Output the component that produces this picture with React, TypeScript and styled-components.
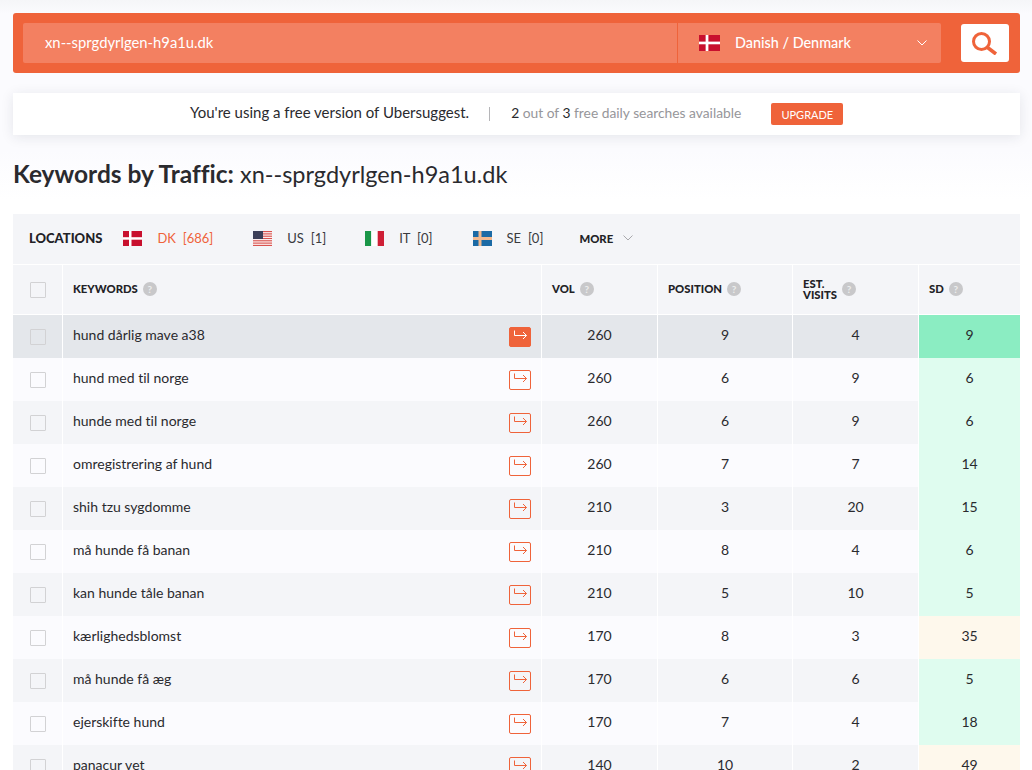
import styled, { createGlobalStyle } from 'styled-components'
import { FunctionComponent } from 'react'

const GlobalStyle = createGlobalStyle`
  html, body {
    margin: 0;
    height: 770px;
    overflow: hidden;
    background: #fff;
    font-family: Lato, "Noto Sans", sans-serif;
    font-variant-ligatures: none;
    color: #2a2a2e;
  }
  * { box-sizing: border-box; }
`

const ORANGE = '#ef633a'
const GRID = '50px 479px 116px 135px 126px 101px'

const Page = styled('div')`
  height: 770px;
  padding: 13px 12px 0 13px;
  background: linear-gradient(to bottom, #f5f6f8 0, #fbfbfe 14px, #fbfbfe 150px, #ffffff 200px);
`

const SearchBar = styled('div')`
  height: 60px;
  padding: 10px 11px 10px 10px;
  display: flex;
  align-items: center;
  background: ${ORANGE};
  border-radius: 3px;
`

const DomainInput = styled('div')`
  width: 654px;
  height: 40px;
  padding: 0 0 3px 22px;
  display: flex;
  align-items: center;
  background: #f38061;
  border-radius: 2px 0 0 2px;
  color: #fff;
  font-size: 14.8px;
`

const LanguageSelect = styled('div')`
  width: 263px;
  height: 40px;
  margin-left: 1px;
  padding: 0 14px 0 21px;
  display: flex;
  align-items: center;
  background: #f38061;
  border-radius: 0 2px 2px 0;
  color: #fff;
  font-size: 14.4px;
  font-weight: 500;

  & > span {
    margin: 0 0 1px 15px;
    flex-grow: 1;
  }
`

const SearchButton = styled('div')`
  width: 48px;
  height: 38px;
  margin-left: 20px;
  display: flex;
  align-items: center;
  justify-content: center;
  background: #fff;
  border-radius: 3px;
`

const Banner = styled('div')`
  height: 42px;
  margin-top: 20px;
  padding-left: 177px;
  display: flex;
  align-items: center;
  background: #fff;
  box-shadow: 0 2px 12px rgba(30, 40, 60, 0.1);
`

const BannerText = styled('span')`
  margin-bottom: 5px;
  font-size: 15px;
`

const BannerDivider = styled('span')`
  width: 1px;
  height: 14px;
  margin: 0 21px 0 20px;
  background: #b5b5b8;
`

const Quota = styled('span')`
  margin-bottom: 4px;
  color: #96969a;
  font-size: 13.8px;

  & > b {
    color: #2a2a2e;
    font-weight: 400;
  }
`

const UpgradeButton = styled('span')`
  width: 72px;
  height: 22px;
  margin-left: 30px;
  display: flex;
  align-items: center;
  justify-content: center;
  background: ${ORANGE};
  border-radius: 2px;
  color: #fff;
  font-size: 11px;
`

const Title = styled('h1')`
  margin: 23px 0 24px;
  height: 32px;
  line-height: 32px;
  font-size: 23.5px;
  font-weight: 400;
  white-space: nowrap;

  & > b {
    font-size: 24.5px;
    font-weight: 700;
  }
`

const Locations = styled('div')`
  height: 51px;
  padding: 0 0 2px 16px;
  display: flex;
  align-items: center;
  background: #f4f5f8;
  border-bottom: 1px solid #fff;
`

const Caps = styled('span')`
  font-size: 11.3px;
  font-weight: 900;
  color: #222226;
`

const LocationsLabel = styled(Caps)`
  font-size: 13px;
`

const LocationTab = styled('span')<{ $active?: boolean; $left: number }>`
  margin-left: ${p => p.$left}px;
  display: flex;
  align-items: center;
  font-size: 13px;
  color: ${p => (p.$active ? ORANGE : '#3a3a3e')};

  & > span {
    margin-left: 15px;
    word-spacing: 3.5px;
  }
`

const MoreTab = styled('span')`
  margin-left: 36px;
  display: flex;
  align-items: center;
  gap: 10px;
`

const Row = styled('div')<{ $bg?: string }>`
  display: grid;
  grid-template-columns: ${GRID};
  height: 43px;
  background: ${p => p.$bg || 'transparent'};
`

const HeaderRow = styled(Row)`
  height: 50px;
  background: #f4f5f8;
  border-bottom: 1px solid #fff;
`

const Cell = styled('div')<{ $bg?: string; $last?: boolean }>`
  display: flex;
  align-items: center;
  justify-content: center;
  padding-bottom: 5px;
  font-size: 14px;
  background: ${p => p.$bg || 'transparent'};
  border-right: ${p => (p.$last ? 'none' : '1px solid #fff')};
`

const KeywordCell = styled(Cell)`
  justify-content: space-between;
  padding: 0 10px;

  & > span {
    padding-bottom: 5px;
  }
`

const HeadCell = styled('div')<{ $last?: boolean }>`
  display: flex;
  align-items: center;
  gap: 5px;
  padding: 0 0 2px 10px;
  border-right: ${p => (p.$last ? 'none' : '1px solid #fff')};
`

const TwoLine = styled(Caps)`
  line-height: 11.5px;
  margin-top: 1px;
`

const CheckCell = styled(Cell)`
  padding: 1px 0 0;
`

const Checkbox = styled('span')`
  width: 16px;
  height: 16px;
  border: 1px solid #d2d2d4;
  border-radius: 1px;
`

const Help = styled('span')`
  width: 14px;
  height: 14px;
  display: flex;
  align-items: center;
  justify-content: center;
  border-radius: 50%;
  background: #c8c8ca;
  color: #eceded;
  font-size: 10px;
  font-weight: 700;
`

const ArrowButton = styled('span')<{ $filled?: boolean }>`
  width: 22px;
  height: 20px;
  margin-top: 1px;
  display: flex;
  align-items: center;
  justify-content: center;
  border: 1px solid ${ORANGE};
  border-radius: 2px;
  background: ${p => (p.$filled ? ORANGE : 'transparent')};
  color: ${p => (p.$filled ? '#fff' : ORANGE)};
`

// End styled components ------------------------------

interface Keyword {
  name: string
  vol: number
  pos: number
  visits: number
  sd: number
}

interface FlagProps {
  w?: number
  h?: number
}

const keywords: Keyword[] = [
  { name: 'hund dårlig mave a38', vol: 260, pos: 9, visits: 4, sd: 9 },
  { name: 'hund med til norge', vol: 260, pos: 6, visits: 9, sd: 6 },
  { name: 'hunde med til norge', vol: 260, pos: 6, visits: 9, sd: 6 },
  { name: 'omregistrering af hund', vol: 260, pos: 7, visits: 7, sd: 14 },
  { name: 'shih tzu sygdomme', vol: 210, pos: 3, visits: 20, sd: 15 },
  { name: 'må hunde få banan', vol: 210, pos: 8, visits: 4, sd: 6 },
  { name: 'kan hunde tåle banan', vol: 210, pos: 5, visits: 10, sd: 5 },
  { name: 'kærlighedsblomst', vol: 170, pos: 8, visits: 3, sd: 35 },
  { name: 'må hunde få æg', vol: 170, pos: 6, visits: 6, sd: 5 },
  { name: 'ejerskifte hund', vol: 170, pos: 7, visits: 4, sd: 18 },
  { name: 'panacur vet', vol: 140, pos: 10, visits: 2, sd: 49 }
]

const sdColor = (sd: number, active: boolean) => {
  if (active) return '#8bedc2'
  return sd > 30 ? '#fef8ec' : '#dffcef'
}

const FlagDK: FunctionComponent<FlagProps> = ({ w = 19, h = 15 }) => (
  <svg width={w} height={h} viewBox="0 0 19 15" preserveAspectRatio="none">
    <rect width="19" height="15" fill="#c8102e" />
    <rect x="6" width="2.5" height="15" fill="#fff" />
    <rect y="6.2" width="19" height="2.5" fill="#fff" />
  </svg>
)

const FlagUS = () => (
  <svg width="19" height="15" viewBox="0 0 19 15">
    <rect width="19" height="15" fill="#fff" />
    {[0, 2.3, 4.6, 6.9, 9.2, 11.5, 13.8].map(y => (
      <rect key={y} y={y} width="19" height="1.2" fill="#d9534f" />
    ))}
    <rect width="10" height="8" fill="#3c3f58" />
  </svg>
)

const FlagIT = () => (
  <svg width="19" height="15" viewBox="0 0 19 15">
    <rect width="6.3" height="15" fill="#1a9648" />
    <rect x="6.3" width="6.4" height="15" fill="#fff" />
    <rect x="12.7" width="6.3" height="15" fill="#ce1f36" />
  </svg>
)

const FlagSE = () => (
  <svg width="19" height="15" viewBox="0 0 19 15">
    <rect width="19" height="15" fill="#1b6aa5" />
    <rect x="5.5" width="3" height="15" fill="#f2b98f" />
    <rect y="6" width="19" height="3" fill="#f2b98f" />
  </svg>
)

const Chevron: FunctionComponent<{ color: string }> = ({ color }) => (
  <svg width="10" height="6" viewBox="0 0 10 6" fill="none" stroke={color} strokeWidth="1">
    <path d="M0.5 0.5 L5 5 L9.5 0.5" />
  </svg>
)

const ArrowIcon = () => (
  <svg width="13" height="10" viewBox="0 0 13 10" fill="none" stroke="currentColor" strokeWidth="1">
    <path d="M0.5 0.5 V5.5 H12.5 M9 2 L12.5 5.5 L9 9" />
  </svg>
)

const App = () => (
  <Page>
    <GlobalStyle />
    <SearchBar>
      <DomainInput>xn--sprgdyrlgen-h9a1u.dk</DomainInput>
      <LanguageSelect>
        <FlagDK w={21} h={16} />
        <span>Danish / Denmark</span>
        <Chevron color="#fff" />
      </LanguageSelect>
      <SearchButton>
        <svg width="26" height="24" viewBox="0 0 26 24" fill="none" stroke={ORANGE}>
          <circle cx="9.5" cy="10.5" r="8" strokeWidth="3" />
          <path d="M15.5 16.5 L24 23" strokeWidth="3.6" />
        </svg>
      </SearchButton>
    </SearchBar>

    <Banner>
      <BannerText>You're using a free version of Ubersuggest.</BannerText>
      <BannerDivider />
      <Quota><b>2</b> out of <b>3</b> free daily searches available</Quota>
      <UpgradeButton>UPGRADE</UpgradeButton>
    </Banner>

    <Title><b>Keywords by Traffic:</b> xn--sprgdyrlgen-h9a1u.dk</Title>

    <Locations>
      <LocationsLabel>LOCATIONS</LocationsLabel>
      <LocationTab $active $left={21}><FlagDK /><span>DK [686]</span></LocationTab>
      <LocationTab $left={40}><FlagUS /><span>US [1]</span></LocationTab>
      <LocationTab $left={39}><FlagIT /><span>IT [0]</span></LocationTab>
      <LocationTab $left={40}><FlagSE /><span>SE [0]</span></LocationTab>
      <MoreTab><Caps>MORE</Caps><Chevron color="#a8a8ac" /></MoreTab>
    </Locations>

    <HeaderRow>
      <CheckCell><Checkbox /></CheckCell>
      <HeadCell><Caps>KEYWORDS</Caps><Help>?</Help></HeadCell>
      <HeadCell><Caps>VOL</Caps><Help>?</Help></HeadCell>
      <HeadCell><Caps>POSITION</Caps><Help>?</Help></HeadCell>
      <HeadCell><TwoLine>EST.<br />VISITS</TwoLine><Help>?</Help></HeadCell>
      <HeadCell $last><Caps>SD</Caps><Help>?</Help></HeadCell>
    </HeaderRow>

    {keywords.map((k, i) => {
      const active = i === 0
      const bg = active ? '#e4e7eb' : i % 2 === 1 ? '#fbfbfe' : '#f4f5f8'
      return (
        <Row key={k.name} $bg={bg}>
          <CheckCell><Checkbox /></CheckCell>
          <KeywordCell>
            <span>{k.name}</span>
            <ArrowButton $filled={active}><ArrowIcon /></ArrowButton>
          </KeywordCell>
          <Cell>{k.vol}</Cell>
          <Cell>{k.pos}</Cell>
          <Cell>{k.visits}</Cell>
          <Cell $last $bg={sdColor(k.sd, active)}>{k.sd}</Cell>
        </Row>
      )
    })}
  </Page>
)

export default App
